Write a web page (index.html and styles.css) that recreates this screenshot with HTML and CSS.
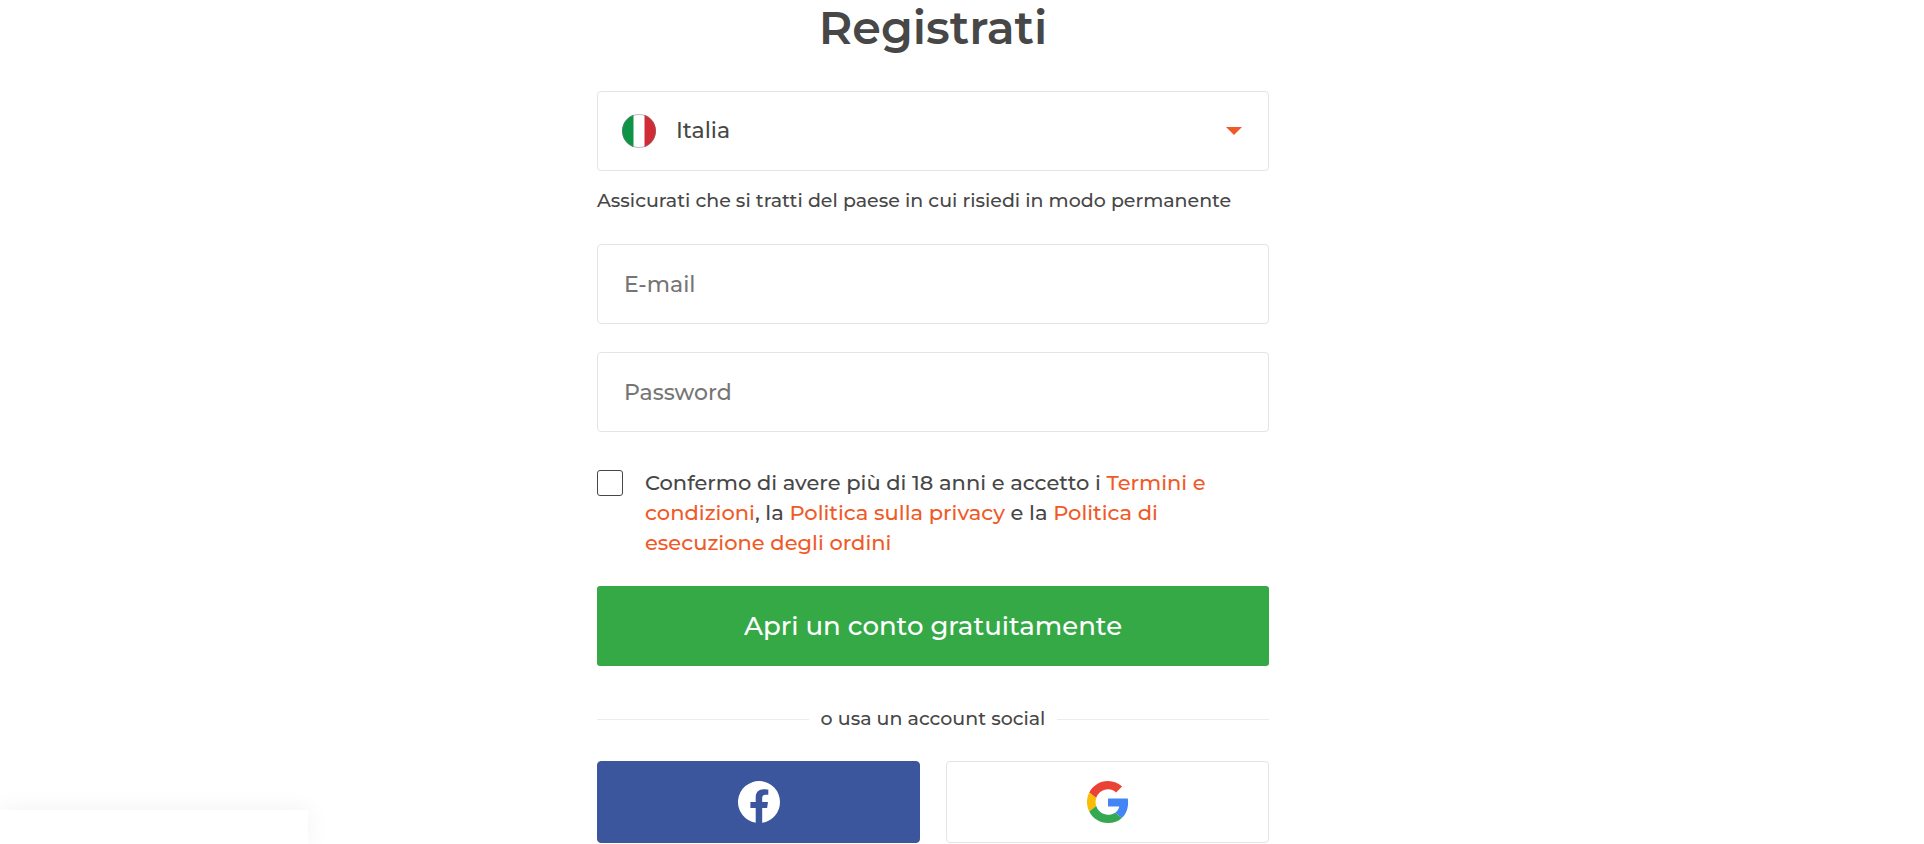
FILE: index.html
```html
<!DOCTYPE html>
<html lang="it">
<head>
    <meta charset="UTF-8">
    <meta name="viewport" content="width=device-width, initial-scale=1">
    <title>Registrati</title>

    <link rel="stylesheet" href="styles.css">
</head>
<body>

<main class="signup">
    <h1 class="signup-title">Registrati</h1>

    <form class="signup-form" action="/">
        <div class="country">
            <svg class="country-flag" viewBox="0 0 34 34" aria-hidden="true">
                <clipPath id="round"><circle cx="17" cy="17" r="17"/></clipPath>
                <g clip-path="url(#round)">
                    <path fill="#fff" d="M0 0h34v34H0z"/>
                    <path fill="#0f9347" d="M0 0h11.5v34H0z"/>
                    <path fill="#d02c36" d="M22.5 0H34v34H22.5z"/>
                </g>
                <circle cx="17" cy="17" r="16.5" fill="none" stroke="#777" stroke-opacity=".5"/>
            </svg>
            <select class="field country-select" name="country" id="country" aria-label="Paese" aria-describedby="country-hint">
                <option value="it">Italia</option>
            </select>
            <svg class="country-arrow" viewBox="0 0 16 8" aria-hidden="true">
                <path fill="#f05a28" d="M0 0h16L8 8z"/>
            </svg>
        </div>
        <p class="hint" id="country-hint">Assicurati che si tratti del paese in cui risiedi in modo permanente</p>

        <input class="field" type="email" name="email" id="email" placeholder="E-mail" aria-label="E-mail">
        <input class="field" type="password" name="password" id="password" placeholder="Password" aria-label="Password">

        <div class="terms">
            <input class="terms-check" type="checkbox" name="terms" id="terms">
            <label class="terms-text" for="terms">Confermo di avere più di 18 anni e accetto i <a href="#">Termini e condizioni</a>, la <a href="#">Politica sulla privacy</a> e la <a href="#">Politica di esecuzione degli ordini</a></label>
        </div>

        <button class="send-form" type="submit">Apri un conto gratuitamente</button>
    </form>

    <div class="divider">o usa un account social</div>

    <div class="social">
        <button class="social-btn social-facebook" type="button" aria-label="Facebook">
            <svg class="social-icon" viewBox="0 0 42 42" aria-hidden="true">
                <path fill="#fff" d="M42 21a21 21 0 1 0-24.300 20.750V27H12.400v-6h5.300v-4.600c0-5.300 3.100-8.200 7.900-8.200 2.300 0 4.700.4 4.700.4v5.100h-2.700c-2.600 0-3.400 1.600-3.400 3.300V21h5.800l-.9 6h-4.900v14.750A21 21 0 0 0 42 21z"/>
            </svg>
        </button>
        <button class="social-btn social-google" type="button" aria-label="Google">
            <svg class="social-icon" viewBox="0 0 48 48" aria-hidden="true">
                <path fill="#ea4335" d="M24 9.500c3.540 0 6.710 1.220 9.210 3.600l6.850-6.850C35.900 2.380 30.470 0 24 0 14.620 0 6.510 5.380 2.560 13.220l7.980 6.190C12.430 13.720 17.740 9.500 24 9.500z"/>
                <path fill="#4285f4" d="M46.980 24.550c0-1.570-.15-3.090-.38-4.550H24v9.020h12.940c-.58 2.960-2.260 5.480-4.780 7.180l7.730 6c4.510-4.180 7.090-10.360 7.090-17.650z"/>
                <path fill="#fbbc05" d="M10.530 28.590c-.48-1.450-.76-2.990-.76-4.590s.27-3.140.76-4.590l-7.980-6.190C.92 16.460 0 20.120 0 24s.92 7.540 2.560 10.780l7.970-6.190z"/>
                <path fill="#34a853" d="M24 48c6.480 0 11.930-2.130 15.890-5.810l-7.730-6c-2.150 1.450-4.920 2.300-8.160 2.300-6.260 0-11.570-4.220-13.470-9.910l-7.980 6.190C6.510 42.620 14.620 48 24 48z"/>
            </svg>
        </button>
    </div>
</main>

<div class="popup"></div>

</body>
</html>
```
FILE: styles.css
```css
* {
    box-sizing: border-box;
}

body {
    margin: 0;
    padding-right: 58px;
    background: #fff;
    color: #474747;
    font: 500 19px/30px Montserrat, Inter, sans-serif;
}

.signup {
    max-width: 672px;
    margin: 0 auto;
}

.signup-title {
    margin: 0;
    padding: 2px 0 37px;
    font-size: 46px;
    font-weight: 600;
    line-height: 52px;
    text-align: center;
}

.signup-form {
    display: flex;
    flex-direction: column;
}

.field {
    width: 100%;
    height: 80px;
    margin-bottom: 28px;
    padding: 0 26px;
    border: 1px solid #e4e4e4;
    border-radius: 4px;
    background: #fff;
    color: #474747;
    font: inherit;
    font-size: 22px;
    outline: none;
}

.field::placeholder {
    color: #757575;
    opacity: 1;
}

.field:focus {
    border-color: #36a947;
}

.country {
    position: relative;
}

.country-select {
    display: block;
    margin: 0;
    padding: 0 72px 0 78px;
    appearance: none;
}

.country-flag {
    position: absolute;
    top: 23px;
    left: 25px;
    width: 34px;
    height: 34px;
    pointer-events: none;
}

.country-arrow {
    position: absolute;
    top: 36px;
    right: 27px;
    width: 16px;
    height: 8px;
    pointer-events: none;
}

.hint {
    margin: 15px 0 28px;
}

.terms {
    display: flex;
    gap: 22px;
    padding: 8px 48px 28px 0;
    font-size: 21px;
}

.terms-check {
    flex: none;
    width: 26px;
    height: 26px;
    margin: 2px 0 0;
    border: 1px solid #474747;
    border-radius: 3px;
    background: #fff;
    appearance: none;
}

.terms-check:checked {
    background: #36a947;
}

.terms a {
    color: #f05a28;
    text-decoration: none;
}

.send-form {
    height: 80px;
    border: 0;
    border-radius: 3px;
    background: #36a947;
    color: #fff;
    cursor: pointer;
    font: inherit;
    font-size: 26px;
}

.divider {
    display: flex;
    align-items: center;
    gap: 12px;
    padding: 38px 0 27px;
}

.divider::before,
.divider::after {
    content: '';
    flex: 1;
    height: 1px;
    background: #ececec;
}

.social {
    display: grid;
    grid-template-columns: 1fr 1fr;
    gap: 26px;
}

.social-btn {
    display: flex;
    align-items: center;
    justify-content: center;
    height: 82px;
    padding: 0;
    border: 1px solid #e4e4e4;
    border-radius: 4px;
    background: #fff;
    cursor: pointer;
}

.social-facebook {
    border-color: #3b569d;
    background: #3b569d;
}

.social-icon {
    width: 42px;
    height: 42px;
}

.popup {
    position: fixed;
    bottom: 0;
    left: 0;
    width: 308px;
    height: 34px;
    background: #fff;
    box-shadow: 0 0 24px rgba(0, 0, 0, .06);
}
```
